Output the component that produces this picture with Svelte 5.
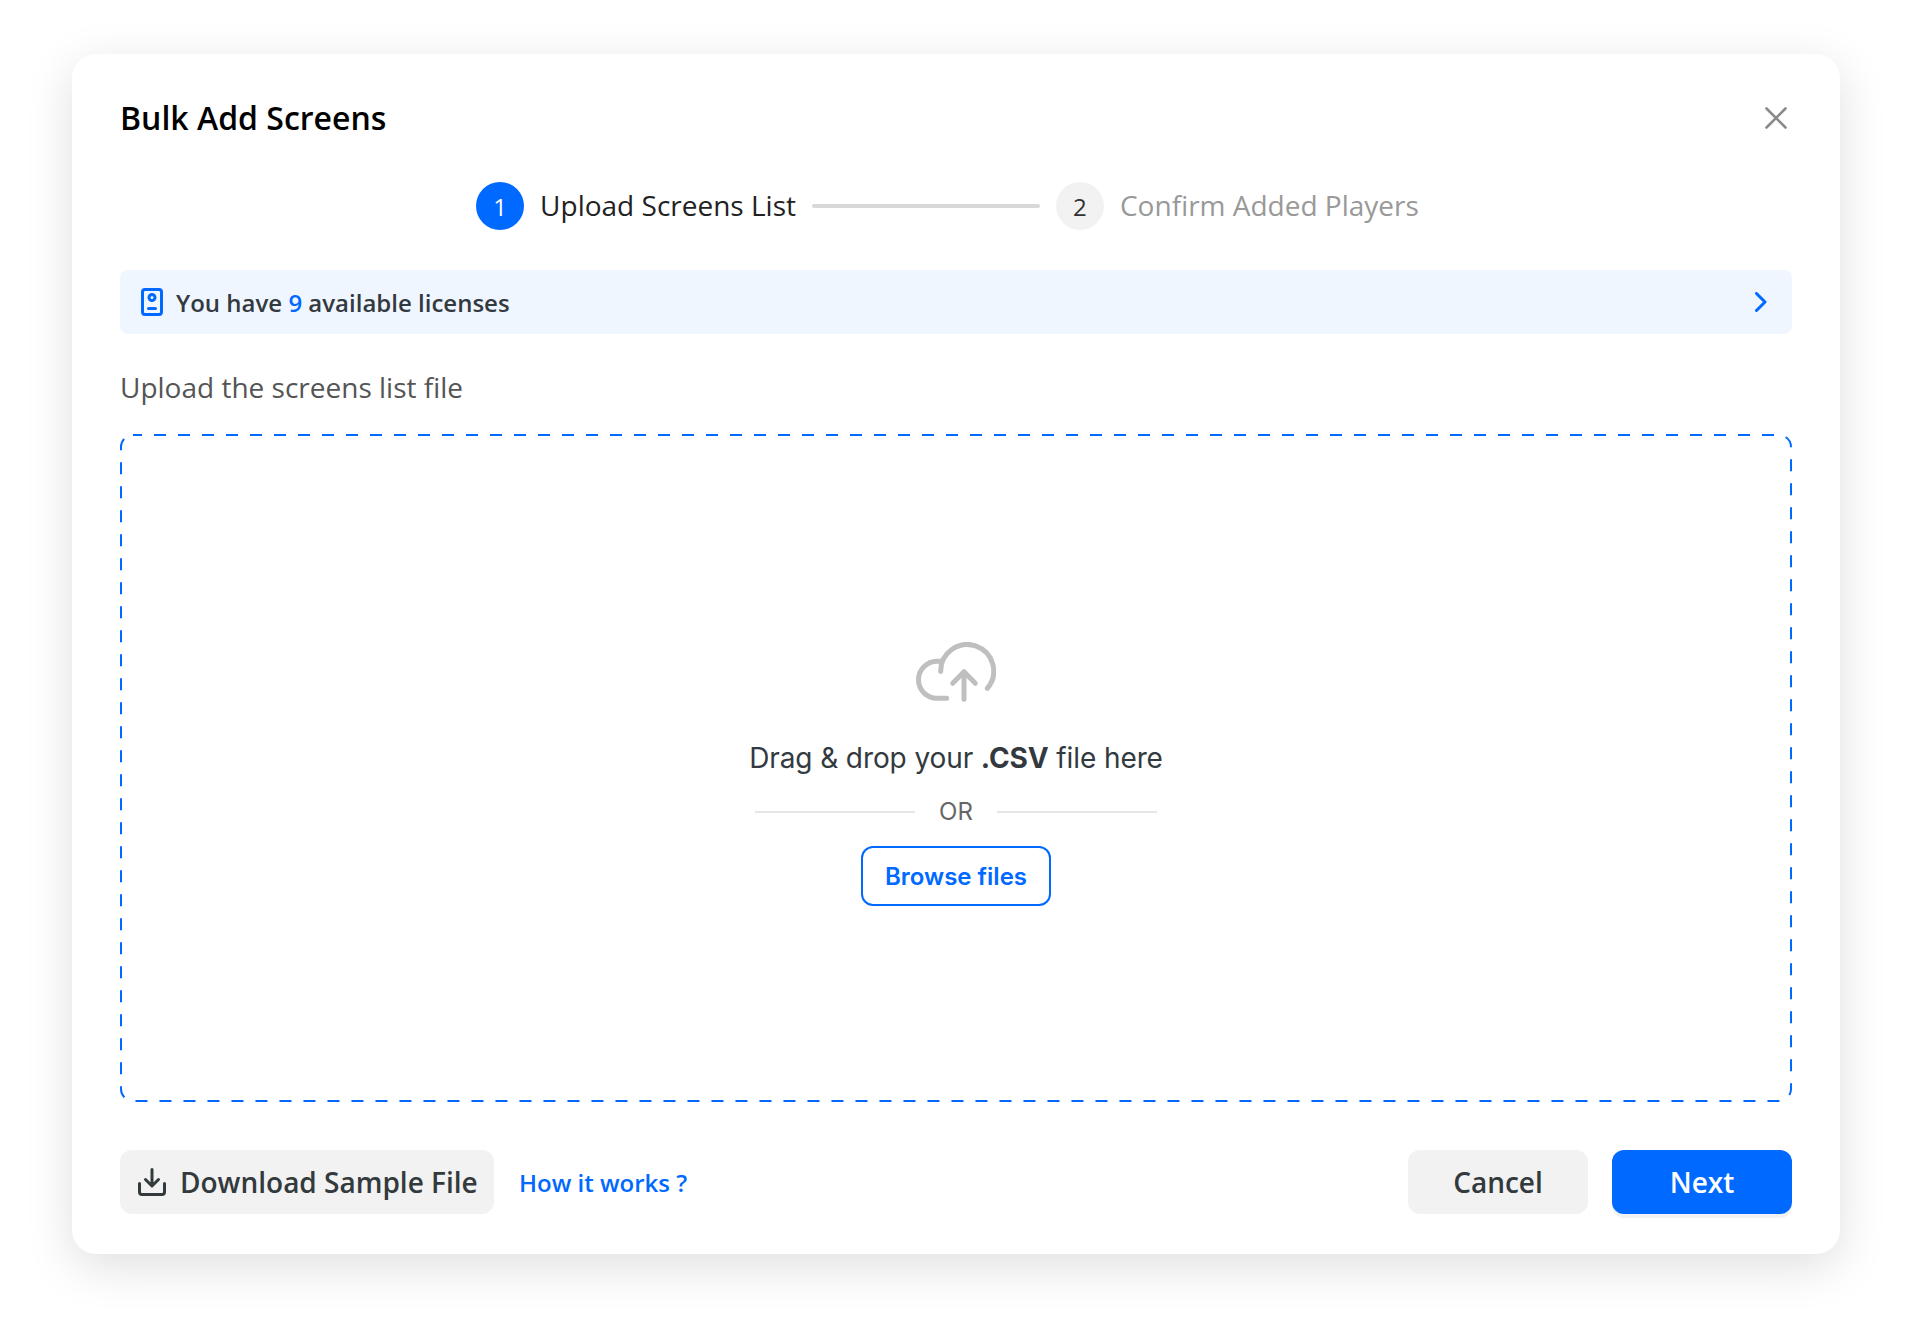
<script>
  const title = 'Bulk Add Screens';
</script>

<div class="page">
  <div class="modal">
    <header class="head">
      <h1>{title}</h1>
      <svg class="close" width="22" height="22" viewBox="0 0 22 22" fill="none" stroke="#8a8a8a" stroke-width="2.6" stroke-linecap="round"><path d="M1.5 1.5l19 19M20.500 1.500l-19 19"/></svg>
    </header>

    <div class="stepper">
      <span class="dot on">1</span>
      <span class="step on">Upload Screens List</span>
      <span class="bar"></span>
      <span class="dot">2</span>
      <span class="step">Confirm Added Players</span>
    </div>

    <div class="alert">
      <svg width="22" height="28" viewBox="0 0 22 28" fill="none" stroke="#0069ff" stroke-width="3" stroke-linecap="round"><rect x="1.500" y="1.500" width="19" height="25" rx="2.500"/><circle cx="11" cy="9.500" r="3"/><path d="M7.500 20.500h7"/></svg>
      <span class="atext">You have <b>9</b> available licenses</span>
      <svg class="chev" width="12" height="20" viewBox="0 0 12 20" fill="none" stroke="#0069ff" stroke-width="3" stroke-linecap="round" stroke-linejoin="round"><path d="M1.500 1.500l8.500 8.500-8.500 8.500"/></svg>
    </div>

    <p class="label">Upload the screens list file</p>

    <div class="drop">
      <svg class="dash" width="100%" height="100%"><rect x="1" y="1" width="1670" height="666" rx="12" fill="none" stroke="#0069ff" stroke-width="2" stroke-dasharray="12 12" stroke-dashoffset="3"/></svg>
      <svg class="cloud" width="80" height="60" viewBox="0 0 80 60" fill="none" stroke="#bfbfbf" stroke-width="5" stroke-linecap="round" stroke-linejoin="round">
        <path d="M30.700 56.300H21A18.500 18.500 0 0 1 21 19.300H24.500"/>
        <path d="M24.700 29.500A26.500 26.500 0 1 1 71.300 46.300"/>
        <path d="M48 57.300V30M36.700 41.300L48 29.700L59.300 41.300"/>
      </svg>
      <p class="dragtext">Drag &amp; drop your <b>.CSV</b> file here</p>
      <div class="or"><span class="line"></span><span>OR</span><span class="line"></span></div>
      <button class="browse">Browse files</button>
    </div>

    <footer class="foot">
      <button class="btn grey dl">
        <svg width="28" height="28" viewBox="0 0 28 28" fill="none" stroke="#333a3d" stroke-width="3" stroke-linecap="round" stroke-linejoin="round"><path d="M14 1.500V18M7.500 11.500L14 18l6.500-6.500M1.500 15.500v8.500a2.500 2.500 0 0 0 2.500 2.500h20a2.500 2.500 0 0 0 2.500-2.500v-8.500"/></svg>
        Download Sample File
      </button>
      <span class="how">How it works ?</span>
      <span class="grow"></span>
      <button class="btn grey act">Cancel</button>
      <button class="btn blue act">Next</button>
    </footer>
  </div>
</div>

<style>
  :global(body) { margin: 0; background: #fff; }
  .page { width: 1912px; height: 1344px; box-sizing: border-box; padding: 54px 72px 90px; font-family: "Open Sans", sans-serif; }
  .modal { height: 1200px; box-sizing: border-box; padding: 48px 48px 40px; background: #fff; border-radius: 24px; box-shadow: 0 12px 48px rgba(0,0,0,.13); display: flex; flex-direction: column; }
  .head { height: 32px; display: flex; align-items: center; justify-content: space-between; }
  h1 { margin: 0; font-size: 32px; line-height: 32px; font-weight: 600; color: #000; }
  .close { margin-right: 5px; }
  .stepper { margin-top: 48px; height: 48px; padding-right: 17px; display: flex; align-items: center; justify-content: center; gap: 16px; }
  .dot { width: 48px; height: 48px; border-radius: 50%; background: #f2f2f2; color: #333; display: flex; align-items: center; justify-content: center; font-size: 24px; }
  .dot.on { background: #0069ff; color: #fff; }
  .step { font-size: 28px; line-height: 38px; margin-bottom: 2px; color: #999; }
  .step.on { color: #222; }
  .bar { width: 228px; height: 4px; border-radius: 2px; background: #d8d8d8; }
  .alert { margin-top: 40px; height: 64px; box-sizing: border-box; padding: 0 25px 0 21px; background: #f0f6ff; border-radius: 8px; display: flex; align-items: center; gap: 13px; }
  .atext { font-size: 24px; font-weight: 600; color: #333a3f; flex: 1; }
  .atext b { font-weight: 600; color: #0069ff; }
  .label { margin: 34px 0 27px; font-size: 28px; line-height: 39px; color: #555; }
  .drop { position: relative; height: 668px; box-sizing: border-box; padding-top: 12px; display: flex; flex-direction: column; align-items: center; justify-content: center; }
  .dash { position: absolute; inset: 0; }
  .dragtext { margin: 36px 0 0; font-family: Inter, sans-serif; font-size: 28px; line-height: 40px; letter-spacing: -0.1px; color: #333a3f; }
  .dragtext b { font-weight: 700; }
  .or { margin-top: 17px; display: flex; align-items: center; gap: 24px; font-family: Inter, sans-serif; font-size: 24px; line-height: 34px; color: #666; }
  .line { width: 160px; height: 2px; background: #e6e6e6; }
  .browse { margin-top: 17px; width: 190px; height: 60px; box-sizing: border-box; border: 2px solid #0069ff; border-radius: 12px; background: #fff; color: #0069ff; font-family: Inter, sans-serif; font-size: 24px; font-weight: 600; padding: 0; }
  .foot { margin-top: 48px; height: 64px; display: flex; align-items: center; }
  .btn { height: 64px; border: 0; border-radius: 12px; font-family: "Open Sans", sans-serif; font-size: 28px; font-weight: 600; padding: 0; display: flex; align-items: center; justify-content: center; }
  .grey { background: #f2f2f2; color: #333a3d; }
  .blue { background: #0069ff; color: #fff; margin-left: 24px; box-shadow: 0 4px 0 #f2f2f2; }
  .dl { width: 374px; gap: 14px; justify-content: flex-start; padding-left: 18px; }
  .act { width: 180px; }
  .how { margin-left: 25px; font-size: 24px; font-weight: 600; color: #0069ff; }
  .grow { flex: 1; }
  p { margin: 0; }
</style>
